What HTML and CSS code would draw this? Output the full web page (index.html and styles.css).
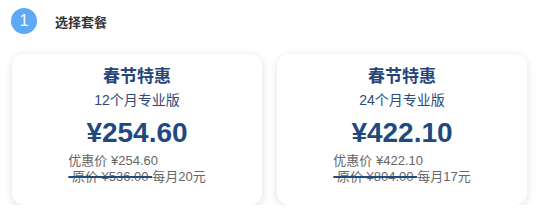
FILE: index.html
```html
<!DOCTYPE html>
<html lang="zh-CN">
<head>
    <meta charset="UTF-8">
    <title>选择套餐</title>
    <link rel="stylesheet" href="styles.css">
</head>
<body>
    <div class="step">
        <div class="step-num">1</div>
        <div class="step-title">选择套餐</div>
    </div>
    <div class="plans">
        <div class="plan">
            <div class="plan-name">春节特惠</div>
            <div class="plan-term">12个月专业版</div>
            <div class="plan-price">¥254.60</div>
            <div class="plan-detail">
                <div>优惠价 ¥254.60</div>
                <div><span class="old">&nbsp;原价 ¥536.00&nbsp;</span>每月20元</div>
            </div>
        </div>
        <div class="plan">
            <div class="plan-name">春节特惠</div>
            <div class="plan-term">24个月专业版</div>
            <div class="plan-price">¥422.10</div>
            <div class="plan-detail">
                <div>优惠价 ¥422.10</div>
                <div><span class="old">&nbsp;原价 ¥804.00&nbsp;</span>每月17元</div>
            </div>
        </div>
    </div>
</body>
</html>
```

FILE: styles.css
```css
body {
    margin: 0;
    background-color: #fff;
    font-family: "Liberation Sans", Arial, "Noto Sans CJK SC", sans-serif;
}

.step {
    display: flex;
    align-items: center;
    gap: 18px;
    padding: 8px 11px 0;
}

.step-num {
    width: 26px;
    height: 26px;
    border-radius: 50%;
    background-color: #5ea9f6;
    color: #fff;
    font-size: 16px;
    line-height: 26px;
    text-align: center;
}

.step-title {
    font-size: 13px;
    font-weight: bold;
    color: #333;
}

.plans {
    display: flex;
    gap: 15px;
    padding: 20px 12px 0;
}

.plan {
    width: 250px;
    box-sizing: border-box;
    padding: 12px 0 20px;
    border-radius: 12px;
    background-color: #fff;
    box-shadow: 0 2px 8px rgba(0, 0, 0, 0.13);
    text-align: center;
}

.plan-name {
    font-size: 17px;
    font-weight: bold;
    line-height: 22px;
    color: #26467b;
}

.plan-term {
    margin-top: 2px;
    font-size: 14px;
    line-height: 20px;
    color: #2e4a78;
}

.plan-price {
    margin-top: 6px;
    font-size: 28px;
    font-weight: bold;
    line-height: 34px;
    color: #20497f;
}

.plan-detail {
    display: inline-block;
    margin-top: 3px;
    text-align: left;
    font-size: 13px;
    line-height: 16px;
    color: #666;
}

.old {
    text-decoration: line-through;
    text-decoration-color: #1f4a82;
    text-decoration-thickness: 2px;
}
```
